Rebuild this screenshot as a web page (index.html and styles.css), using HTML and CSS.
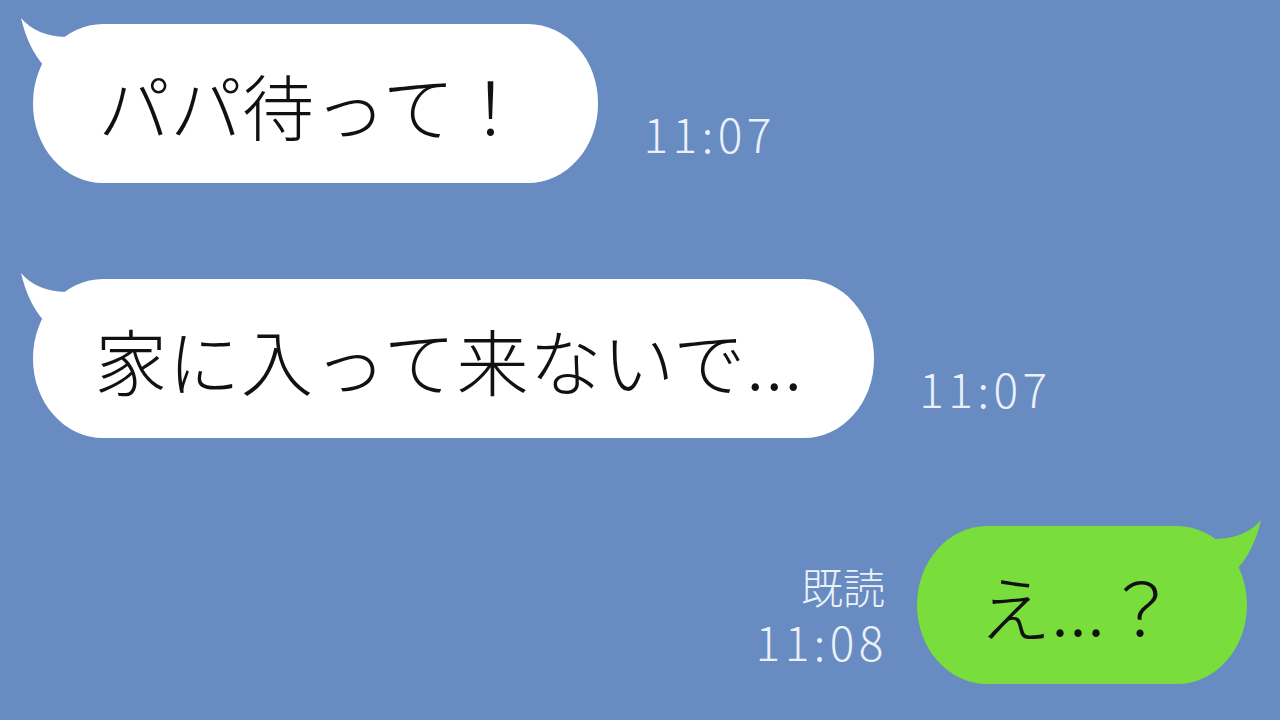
FILE: index.html
```html
<!DOCTYPE html>
<html lang="ja">
<head>
    <meta charset="UTF-8">
    <title>トーク</title>
    <link rel="stylesheet" href="styles.css">
</head>
<body>
    <div class="chat">
        <div class="row first">
            <div class="bubble white">
                <svg class="tail" viewBox="0 0 60 60" width="60" height="60"><path d="M1 1 Q16 19 46 20 L50 53 L24 49 Q8 31 1 1 Z"/></svg>
                <span class="text">パパ待って！</span>
            </div>
            <div class="time">11:07</div>
        </div>

        <div class="row second">
            <div class="bubble white wide">
                <svg class="tail" viewBox="0 0 60 60" width="60" height="60"><path d="M1 1 Q16 19 46 20 L50 53 L24 49 Q8 31 1 1 Z"/></svg>
                <span class="text">家に入って来ないで...</span>
            </div>
            <div class="time">11:07</div>
        </div>

        <div class="row mine">
            <div class="meta">
                <div class="read">既読</div>
                <div class="time">11:08</div>
            </div>
            <div class="bubble green">
                <svg class="tail" viewBox="0 0 60 60" width="60" height="60"><path d="M1 1 Q16 19 46 20 L50 53 L24 49 Q8 31 1 1 Z"/></svg>
                <span class="text">え...？</span>
            </div>
        </div>
    </div>
</body>
</html>
```

FILE: styles.css
```css
body {
    margin: 0;
    height: 720px;
    overflow: hidden;
    background: #688bc1;
    font-family: "Noto Sans CJK JP", sans-serif;
}
.chat {
    display: flex;
    flex-direction: column;
    padding: 24px 33px 0 33px;
}
.row {
    display: flex;
    align-items: flex-end;
}
.second {
    margin-top: 96px;
}
.mine {
    margin-top: 88px;
    justify-content: flex-end;
}
.bubble {
    position: relative;
    height: 159px;
    display: flex;
    align-items: center;
    border-radius: 70px / 79px;
    padding: 0 72px 0 65px;
    font-size: 72px;
    font-weight: 300;
    line-height: 1;
    color: #111;
}
.bubble.wide {
    padding: 0 71px 0 62px;
    letter-spacing: 1px;
}
.white {
    background: #fff;
    fill: #fff;
}
.green {
    background: #79dd3c;
    fill: #79dd3c;
    height: 158px;
    padding: 0 70px 0 62px;
}
.tail {
    position: absolute;
    left: -13px;
    top: -7px;
}
.green .tail {
    left: auto;
    right: -15px;
    transform: scaleX(-1);
}
.time {
    font-size: 46px;
    font-weight: 300;
    line-height: 46px;
    letter-spacing: 4.5px;
    color: #eaf1fa;
    margin-left: 45px;
    margin-bottom: 27px;
}
.meta {
    display: flex;
    flex-direction: column;
    align-items: flex-end;
    margin-right: 29px;
    margin-bottom: 20px;
}
.read {
    font-size: 42px;
    font-weight: 300;
    line-height: 42px;
    color: #eaf1fa;
    margin-bottom: 11px;
    margin-right: 3px;
}
.meta .time {
    margin: 0;
}
```
